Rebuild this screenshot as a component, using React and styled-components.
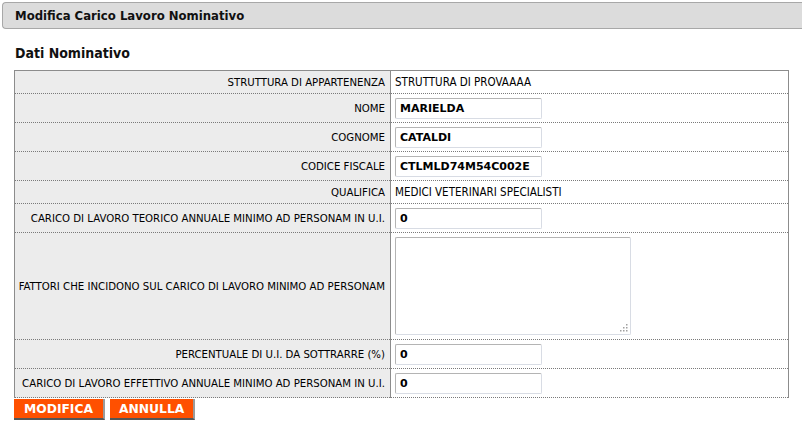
import styled, { createGlobalStyle } from "styled-components";

const GlobalStyle = createGlobalStyle`
body {
    margin: 0;
    background: #fff;
    font-family: "DejaVu Sans Condensed", "DejaVu Sans", sans-serif;
    color: #000;
}
`

const Page = styled.div`
padding-top: 2px;
`
const TitleBar = styled.div`
margin-left: 2px;
height: 25px;
background: #dcdcdc;
border: 1px solid #a8a8a8;
border-right: none;
border-radius: 4px 0 0 4px;
display: flex;
align-items: center;
padding-left: 12px;
font-family: "DejaVu Sans Condensed", "DejaVu Sans", sans-serif;
font-weight: bold;
font-size: 13px;
color: #111;
`
const SectionTitle = styled.h2`
margin: 16px 0 9px 15px;
font-family: "DejaVu Sans Condensed", "DejaVu Sans", sans-serif;
font-size: 14px;
font-weight: bold;
color: #111;
`
const Table = styled.table`
margin-left: 14px;
width: 775px;
border-collapse: collapse;
border: 1px solid #8c8c8c;
border-bottom: none;
`
const Row = styled.tr`
height: ${p => p.$h}px;
border-bottom: 1px dotted #7a7a7a;
`
const LabelCell = styled.td`
width: 370px;
background: #ececec;
border-right: 1px solid #8c8c8c;
text-align: right;
padding: 0 5px 0 0;
font-size: 11.3px;
vertical-align: middle;
`
const ValueCell = styled.td`
padding: 0 0 0 4px;
font-size: 11.5px;
vertical-align: middle;
`
const TextInput = styled.input`
box-sizing: border-box;
display: block;
width: 147px;
height: 21px;
border: 1px solid #b4b4b4;
border-bottom-color: #d8dce4;
border-right-color: #d8dce4;
border-radius: 2px;
padding: 0 4px;
font-family: "DejaVu Sans", sans-serif;
font-weight: bold;
font-size: 11px;
color: #000;
outline: none;
`
const AreaWrap = styled.div`
position: relative;
width: 236px;
height: 98px;
`
const TextArea = styled.textarea`
box-sizing: border-box;
display: block;
width: 100%;
height: 100%;
border: 1px solid #b4b4b4;
border-bottom-color: #d8dce4;
border-right-color: #d8dce4;
border-radius: 2px;
resize: none;
outline: none;
`
const Grip = styled.svg`
position: absolute;
right: 3px;
bottom: 3px;
pointer-events: none;
`
const Buttons = styled.div`
display: flex;
gap: 5px;
margin: 1px 0 0 14px;
`
const Button = styled.button`
height: 21px;
padding: 0 ${p => p.$px}px;
background: #ff5000;
color: #fff;
border: none;
border-right: 2px solid #9a9a9a;
border-bottom: 2px solid #555;
font-family: "DejaVu Sans", sans-serif;
font-weight: bold;
font-size: 12.3px;
cursor: pointer;
`

const fields = [
    { label: "STRUTTURA DI APPARTENENZA", text: "STRUTTURA DI PROVAAAA", h: 23 },
    { label: "NOME", input: "MARIELDA", h: 29 },
    { label: "COGNOME", input: "CATALDI", h: 29 },
    { label: "CODICE FISCALE", input: "CTLMLD74M54C002E", h: 29 },
    { label: "QUALIFICA", text: "MEDICI VETERINARI SPECIALISTI", h: 23 },
    { label: "CARICO DI LAVORO TEORICO ANNUALE MINIMO AD PERSONAM IN U.I.", input: "0", h: 29 },
    { label: "FATTORI CHE INCIDONO SUL CARICO DI LAVORO MINIMO AD PERSONAM", area: true, h: 107 },
    { label: "PERCENTUALE DI U.I. DA SOTTRARRE (%)", input: "0", h: 29 },
    { label: "CARICO DI LAVORO EFFETTIVO ANNUALE MINIMO AD PERSONAM IN U.I.", input: "0", h: 29 },
]

function Notes() {
    return (
        <AreaWrap>
            <TextArea />
            <Grip width="8" height="8" viewBox="0 0 8 8">
                <g fill="#a0a0a0">
                    <rect x="6" y="0" width="1.5" height="1.5" />
                    <rect x="3" y="3" width="1.5" height="1.5" />
                    <rect x="6" y="3" width="1.5" height="1.5" />
                    <rect x="0" y="6" width="1.5" height="1.5" />
                    <rect x="3" y="6" width="1.5" height="1.5" />
                    <rect x="6" y="6" width="1.5" height="1.5" />
                </g>
            </Grip>
        </AreaWrap>
    )
}

export default function App() {
    return (
        <>
        <GlobalStyle />
        <Page>
            <TitleBar>Modifica Carico Lavoro Nominativo</TitleBar>
            <SectionTitle>Dati Nominativo</SectionTitle>
            <Table>
                <tbody>
                {fields.map(f => (
                    <Row key={f.label} $h={f.h}>
                        <LabelCell>{f.label}</LabelCell>
                        <ValueCell>
                            {f.text}
                            {f.input !== undefined && <TextInput defaultValue={f.input} />}
                            {f.area && <Notes />}
                        </ValueCell>
                    </Row>
                ))}
                </tbody>
            </Table>
            <Buttons>
                <Button $px={10}>MODIFICA</Button>
                <Button $px={9}>ANNULLA</Button>
            </Buttons>
        </Page>
        </>
    )
}
